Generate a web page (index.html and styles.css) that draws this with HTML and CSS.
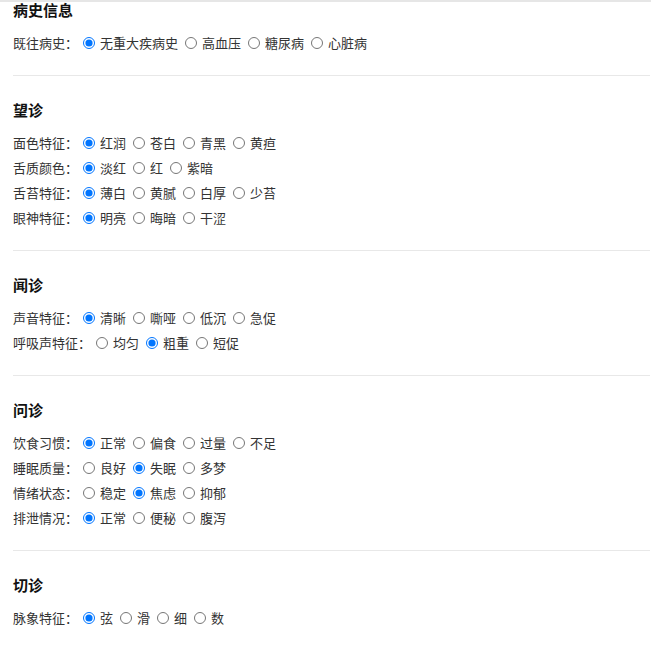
FILE: index.html
```html
<!DOCTYPE html>
<html lang="zh-CN">
<head>
<meta charset="utf-8">
<title>四诊信息</title>
<link rel="stylesheet" href="styles.css">
</head>
<body>
<div class="top-edge"></div>
<div class="page">
  <section class="section first">
    <h3 class="title">病史信息</h3>
    <div class="row"><span class="label">既往病史：</span>
      <label class="opt"><input type="radio" name="bs" checked><span>无重大疾病史</span></label>
      <label class="opt"><input type="radio" name="bs"><span>高血压</span></label>
      <label class="opt"><input type="radio" name="bs"><span>糖尿病</span></label>
      <label class="opt"><input type="radio" name="bs"><span>心脏病</span></label>
    </div>
  </section>

  <section class="section">
    <h3 class="title">望诊</h3>
    <div class="row"><span class="label">面色特征：</span>
      <label class="opt"><input type="radio" name="ms" checked><span>红润</span></label>
      <label class="opt"><input type="radio" name="ms"><span>苍白</span></label>
      <label class="opt"><input type="radio" name="ms"><span>青黑</span></label>
      <label class="opt"><input type="radio" name="ms"><span>黄疸</span></label>
    </div>
    <div class="row"><span class="label">舌质颜色：</span>
      <label class="opt"><input type="radio" name="sz" checked><span>淡红</span></label>
      <label class="opt"><input type="radio" name="sz"><span>红</span></label>
      <label class="opt"><input type="radio" name="sz"><span>紫暗</span></label>
    </div>
    <div class="row"><span class="label">舌苔特征：</span>
      <label class="opt"><input type="radio" name="st" checked><span>薄白</span></label>
      <label class="opt"><input type="radio" name="st"><span>黄腻</span></label>
      <label class="opt"><input type="radio" name="st"><span>白厚</span></label>
      <label class="opt"><input type="radio" name="st"><span>少苔</span></label>
    </div>
    <div class="row"><span class="label">眼神特征：</span>
      <label class="opt"><input type="radio" name="ys" checked><span>明亮</span></label>
      <label class="opt"><input type="radio" name="ys"><span>晦暗</span></label>
      <label class="opt"><input type="radio" name="ys"><span>干涩</span></label>
    </div>
  </section>

  <section class="section">
    <h3 class="title">闻诊</h3>
    <div class="row"><span class="label">声音特征：</span>
      <label class="opt"><input type="radio" name="sy" checked><span>清晰</span></label>
      <label class="opt"><input type="radio" name="sy"><span>嘶哑</span></label>
      <label class="opt"><input type="radio" name="sy"><span>低沉</span></label>
      <label class="opt"><input type="radio" name="sy"><span>急促</span></label>
    </div>
    <div class="row"><span class="label">呼吸声特征：</span>
      <label class="opt"><input type="radio" name="hx"><span>均匀</span></label>
      <label class="opt"><input type="radio" name="hx" checked><span>粗重</span></label>
      <label class="opt"><input type="radio" name="hx"><span>短促</span></label>
    </div>
  </section>

  <section class="section">
    <h3 class="title">问诊</h3>
    <div class="row"><span class="label">饮食习惯：</span>
      <label class="opt"><input type="radio" name="yx" checked><span>正常</span></label>
      <label class="opt"><input type="radio" name="yx"><span>偏食</span></label>
      <label class="opt"><input type="radio" name="yx"><span>过量</span></label>
      <label class="opt"><input type="radio" name="yx"><span>不足</span></label>
    </div>
    <div class="row"><span class="label">睡眠质量：</span>
      <label class="opt"><input type="radio" name="sm"><span>良好</span></label>
      <label class="opt"><input type="radio" name="sm" checked><span>失眠</span></label>
      <label class="opt"><input type="radio" name="sm"><span>多梦</span></label>
    </div>
    <div class="row"><span class="label">情绪状态：</span>
      <label class="opt"><input type="radio" name="qx"><span>稳定</span></label>
      <label class="opt"><input type="radio" name="qx" checked><span>焦虑</span></label>
      <label class="opt"><input type="radio" name="qx"><span>抑郁</span></label>
    </div>
    <div class="row"><span class="label">排泄情况：</span>
      <label class="opt"><input type="radio" name="px" checked><span>正常</span></label>
      <label class="opt"><input type="radio" name="px"><span>便秘</span></label>
      <label class="opt"><input type="radio" name="px"><span>腹泻</span></label>
    </div>
  </section>

  <section class="section last">
    <h3 class="title">切诊</h3>
    <div class="row"><span class="label">脉象特征：</span>
      <label class="opt"><input type="radio" name="mx" checked><span>弦</span></label>
      <label class="opt"><input type="radio" name="mx"><span>滑</span></label>
      <label class="opt"><input type="radio" name="mx"><span>细</span></label>
      <label class="opt"><input type="radio" name="mx"><span>数</span></label>
    </div>
  </section>
</div>
</body>
</html>
```

FILE: styles.css
```css
html, body {
  margin: 0;
  padding: 0;
  background: #ffffff;
}

body {
  font-family: "Noto Sans CJK SC", "Noto Sans", "Liberation Sans", sans-serif;
  color: #333333;
  font-size: 13px;
}

.top-edge {
  position: absolute;
  top: 0;
  left: 0;
  right: 0;
  height: 2px;
  background: #e6e6e6;
}

.page {
  padding: 0 1px 0 13px;
}

.section {
  padding: 24px 0 20px;
  border-bottom: 1px solid #e8e8e8;
}

.section.first {
  padding-top: 0;
}

.section.last {
  border-bottom: none;
}

.title {
  margin: 0 0 10px;
  font-size: 15px;
  line-height: 20px;
  font-weight: bold;
  color: #111111;
}

.row {
  display: flex;
  align-items: center;
  height: 25px;
  white-space: nowrap;
}

.label {
  line-height: 25px;
}

.opt {
  display: flex;
  align-items: center;
  line-height: 25px;
}

.opt input {
  width: 12px;
  height: 12px;
  margin: 0 5px 0 7px;
}

.label + .opt input {
  margin-left: 5px;
}
```
